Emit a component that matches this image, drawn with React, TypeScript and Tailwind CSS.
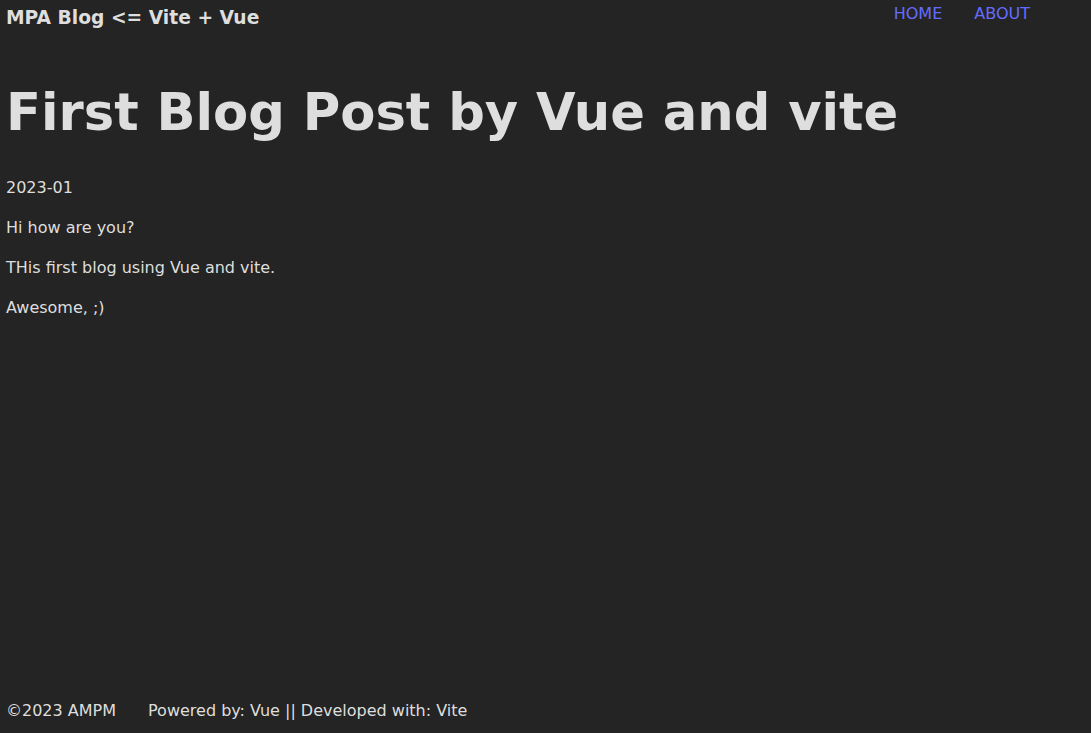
export default function App() {
  return (
    <div className="min-h-screen flex flex-col bg-[#242424] text-[#dedede] font-['DejaVu_Sans',sans-serif] text-base leading-6 px-[6px]">
      <header className="flex items-start justify-between h-[34px]">
        <div className="text-[18.7px] font-bold leading-[34px] pt-[1px]">MPA Blog &lt;= Vite + Vue</div>
        <nav className="flex gap-8 pr-[55px] pt-[2px]">
          <a href="#" className="text-[#646cff]">HOME</a>
          <a href="#" className="text-[#646cff]">ABOUT</a>
        </nav>
      </header>

      <main className="flex-1">
        <h1 className="text-[51.2px] font-bold leading-[1.1] mt-[50px] mb-[36px]">First Blog Post by Vue and vite</h1>
        <p className="mb-4">2023-01</p>
        <p className="mb-4">Hi how are you?</p>
        <p className="mb-4">THis first blog using Vue and vite.</p>
        <p className="mb-4">Awesome, ;)</p>
      </main>

      <footer className="flex gap-8 h-[34px] items-start">
        <span>©2023 AMPM</span>
        <span>Powered by: Vue || Developed with: Vite</span>
      </footer>
    </div>
  )
}
